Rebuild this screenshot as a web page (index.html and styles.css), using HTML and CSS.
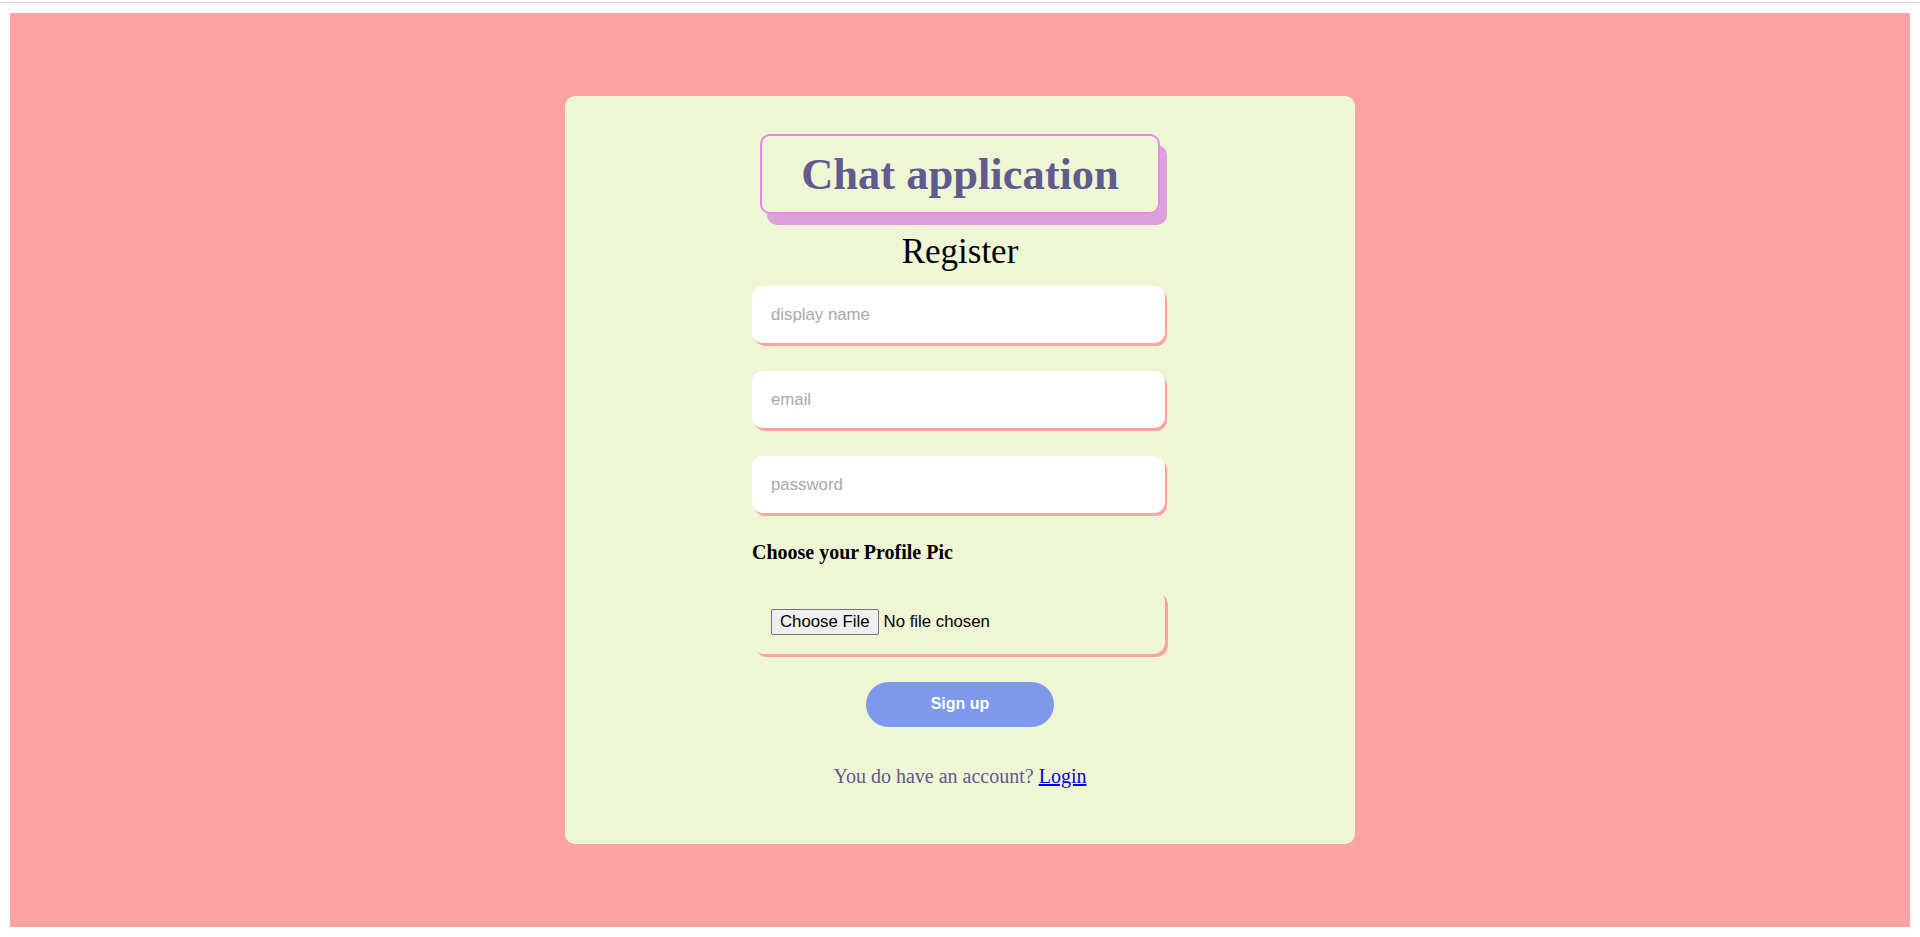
FILE: index.html
```html
<!DOCTYPE html>
<html lang="en">
<head>
<meta charset="utf-8">
<title>Chat application - Register</title>
<link rel="stylesheet" href="styles.css">
</head>
<body>
<div class="topline"></div>
<main class="page">
  <section class="card">
    <h1 class="brand">Chat application</h1>
    <h2 class="heading">Register</h2>
    <form class="form">
      <input class="field" type="text" placeholder="display name">
      <input class="field" type="email" placeholder="email">
      <input class="field" type="password" placeholder="password">
      <label class="pic-label" for="avatar">Choose your Profile Pic</label>
      <div class="file-box">
        <input class="file-input" id="avatar" type="file">
      </div>
      <button class="submit" type="button">Sign up</button>
    </form>
    <p class="footer-note">You do have an account? <a href="#" class="login-link">Login</a></p>
  </section>
</main>
</body>
</html>
```

FILE: styles.css
```css
html, body {
  margin: 0;
  padding: 0;
  background: #ffffff;
}

body {
  font-family: "Liberation Serif", "Times New Roman", serif;
}

.topline {
  height: 1px;
  margin-top: 2px;
  background: #d9d9d9;
}

.page {
  margin: 10px 10px 0;
  height: 914px;
  background: #ffa2a2;
  display: flex;
  align-items: center;
  justify-content: center;
}

.card {
  width: 790px;
  box-sizing: border-box;
  background: #eff6d5;
  border-radius: 10px;
  padding: 38px 0 56px;
  display: flex;
  flex-direction: column;
  align-items: center;
}

.brand {
  margin: 0;
  font-size: 44.5px;
  line-height: 52px;
  font-weight: bold;
  color: #5f5b8e;
  padding: 12px 39px;
  border: 2px solid #ee82ee;
  border-radius: 10px;
  box-shadow: 7px 11px 0 #dda0dd;
}

.heading {
  margin: 18px 0 0;
  font-size: 35px;
  line-height: 40px;
  font-weight: normal;
  color: #000;
}

.form {
  margin-top: 14px;
  margin-right: 3px;
  width: 413px;
  display: flex;
  flex-direction: column;
  align-items: stretch;
}

.field {
  box-sizing: border-box;
  height: 57px;
  width: 100%;
  border: none;
  outline: none;
  border-radius: 11px;
  background: #ffffff;
  padding: 0 19px;
  font-family: "Liberation Sans", Arial, sans-serif;
  font-size: 16.8px;
  color: #333;
  box-shadow: 2px 3px 0 #ffa2a2;
  margin-bottom: 28px;
}

.field::placeholder {
  color: #a9a9a9;
}

.form .field:nth-of-type(3) {
  margin-bottom: 0;
}

.pic-label {
  margin-top: 27.5px;
  font-size: 20px;
  line-height: 23px;
  font-weight: bold;
  color: #000;
}

.file-box {
  margin-top: 26px;
  box-sizing: border-box;
  height: 64px;
  border-radius: 12px;
  box-shadow: 3px 3px 0 #ffa2a2;
  padding: 0 19px;
  display: flex;
  align-items: center;
}

.file-input {
  font-family: "Liberation Sans", Arial, sans-serif;
  font-size: 16.8px;
  color: #000;
}

.file-input::file-selector-button {
  font-family: "Liberation Sans", Arial, sans-serif;
  font-size: 16.8px;
  padding: 2px 8px;
  margin-right: 5px;
  border: 1px solid #767676;
  border-radius: 2px;
  background: #efefef;
  color: #000;
}

.submit {
  align-self: center;
  margin-top: 28px;
  margin-left: 3px;
  width: 188px;
  height: 45px;
  border: none;
  border-radius: 23px;
  background: #7e98ec;
  color: #ffffff;
  font-family: "Liberation Sans", Arial, sans-serif;
  font-size: 16px;
  font-weight: bold;
  cursor: pointer;
}

.footer-note {
  margin: 38.5px 0 0;
  font-size: 20px;
  line-height: 23px;
  color: #5f5b8e;
}

.login-link {
  color: #0000ee;
  text-decoration: underline;
}
```
